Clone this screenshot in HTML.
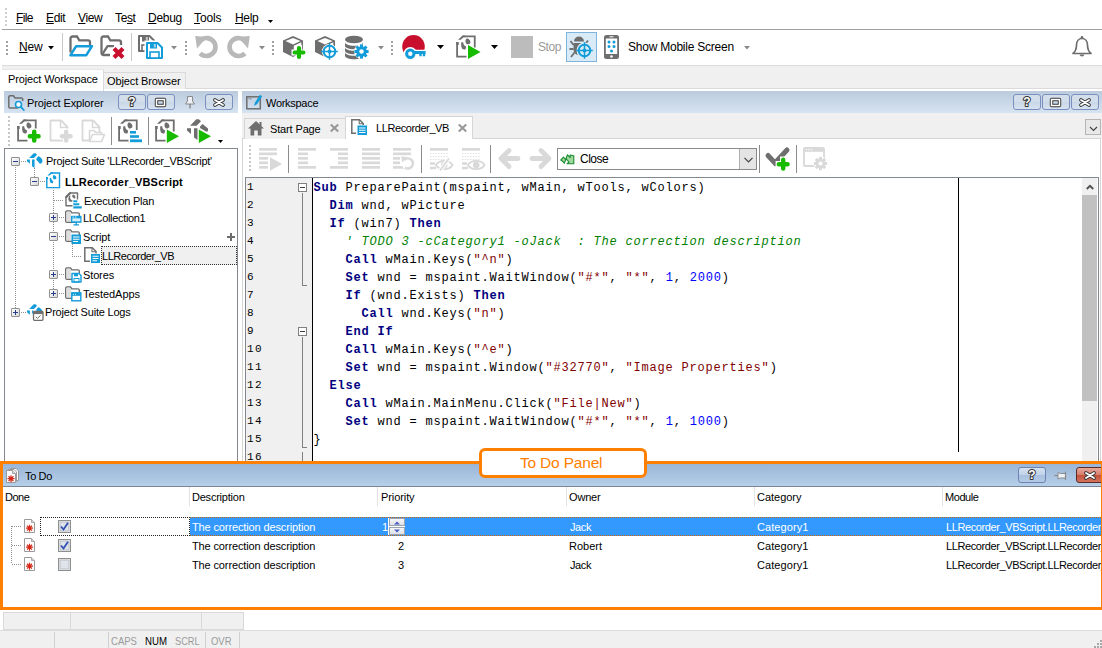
<!DOCTYPE html>
<html>
<head>
<meta charset="utf-8">
<title>To Do Panel</title>
<style>
html,body{margin:0;padding:0}
body{width:1102px;height:648px;position:relative;overflow:hidden;background:#fff;font-family:"Liberation Sans",sans-serif;font-size:11px;color:#000}
.a{position:absolute}
.t{position:absolute;white-space:nowrap;line-height:14px;height:14px}
.m{font-size:12px;line-height:16px;height:16px}
.u{text-decoration:underline}
svg{position:absolute;overflow:visible}
.hdr{background:linear-gradient(#bbcbdd,#d6e3f1)}
.btn{position:absolute;box-sizing:border-box;border:1px solid #7b90c0;border-radius:3px;background:linear-gradient(rgba(255,255,255,.32) 0%,rgba(255,255,255,.18) 48%,rgba(255,255,255,0) 52%,rgba(255,255,255,.12) 100%)}
.sep{position:absolute;width:1px;background:#8c8c8c}
.grip{position:absolute;width:2px;background-image:linear-gradient(#a0a0a0 50%,transparent 50%);background-size:2px 4px}
.code{position:absolute;left:313.5px;white-space:pre;font-family:"Liberation Mono",monospace;font-size:12px;letter-spacing:0.8px;line-height:18px;height:18px;color:#000}
.ln{position:absolute;left:247px;white-space:pre;font-family:"Liberation Mono",monospace;font-size:11px;letter-spacing:1.4px;line-height:18px;height:18px;color:#000}
.k{color:#000080;font-weight:bold}
.s{color:#800000}
.n{color:#0000ff}
.c{color:#008000;font-style:italic}
.col{position:absolute;top:487px;width:1px;height:19px;background:#e2e2e2}
.dot-h{position:absolute;height:1px;background-image:linear-gradient(90deg,#909090 50%,transparent 50%);background-size:2px 1px}
.dot-v{position:absolute;width:1px;background-image:linear-gradient(#909090 50%,transparent 50%);background-size:1px 2px}
.xb{position:absolute;z-index:1;box-sizing:border-box;width:9px;height:9px;border:1px solid #919191;border-radius:1px;background:linear-gradient(135deg,#fff,#d8d8d8)}
.xb:before{content:"";position:absolute;left:1px;top:3px;width:5px;height:1px;background:#2b3c8c}
.xb.p:after{content:"";position:absolute;left:3px;top:1px;width:1px;height:5px;background:#2b3c8c}
</style>
</head>
<body>
<!-- MENU BAR -->
<div class="a" style="left:0;top:0;width:1102px;height:29px;background:#fff"></div>
<div class="a" style="left:2px;top:29px;width:1100px;height:1px;background:#a0a0a0"></div>
<div class="grip" style="left:5px;top:8px;height:18px;opacity:.5"></div>
<div class="t m" id="m1" style="left:16px;top:10px;letter-spacing:-0.61px"><span class="u">F</span>ile</div>
<div class="t m" id="m2" style="left:46px;top:10px;letter-spacing:-0.33px"><span class="u">E</span>dit</div>
<div class="t m" id="m3" style="left:78px;top:10px;letter-spacing:-0.35px"><span class="u">V</span>iew</div>
<div class="t m" id="m4" style="left:115px;top:10px;letter-spacing:-0.36px">Te<span class="u">s</span>t</div>
<div class="t m" id="m5" style="left:148px;top:10px;letter-spacing:-0.28px"><span class="u">D</span>ebug</div>
<div class="t m" id="m6" style="left:194px;top:10px;letter-spacing:-0.1px"><span class="u">T</span>ools</div>
<div class="t m" id="m7" style="left:235px;top:10px;letter-spacing:-0.36px"><span class="u">H</span>elp</div>
<svg style="left:268px;top:20px" width="5" height="3"><path d="M0 0H5L2.500 3Z" fill="#000"/></svg>
<!-- TOOLBAR -->
<div class="a" style="left:0;top:30px;width:1102px;height:35px;background:#fff"></div>
<div class="a" style="left:2px;top:65px;width:1100px;height:1px;background:#dcdcdc"></div>
<div class="t m" id="tbnew" style="left:19px;top:39px;letter-spacing:-0.17px"><span class="u">N</span>ew</div>
<div class="t m" id="tbstop" style="left:538px;top:39px;color:#9a9a9a;letter-spacing:-0.42px">Stop</div>
<div class="t m" id="tbshow" style="left:628px;top:39px;letter-spacing:-0.23px">Show Mobile Screen</div>
<!-- TOOLBAR-ICONS -->
<div class="grip" style="left:6px;top:41px;height:14px;background-size:2px 4px"></div>
<div class="grip" style="left:185px;top:41px;height:14px;background-size:2px 4px"></div>
<div class="grip" style="left:272px;top:41px;height:14px;background-size:2px 4px"></div>
<div class="grip" style="left:391px;top:41px;height:14px;background-size:2px 4px"></div>
<svg style="left:48px;top:46px" width="6" height="3.5"><path d="M0 0H6L3 3.5Z" fill="#000"/></svg>
<div class="sep" style="left:62px;top:33px;height:28px;background:#c8c8c8"></div>
<div class="sep" style="left:131px;top:33px;height:28px;background:#c8c8c8"></div>
<svg style="left:69px;top:35px" width="24" height="24" viewBox="0 0 24 24"><path d="M1.500 17.500V3.500a2 2 0 0 1 2-2H8l2.300 3.800H19a2 2 0 0 1 2 2V10" fill="none" stroke="#6e6e6e" stroke-width="2.300"/><path d="M1.500 20.200L7.200 11.200H23L17.300 20.200Z" fill="#fff" stroke="#129cd9" stroke-width="2.500" stroke-linejoin="round"/></svg>
<svg style="left:100px;top:35px" width="24" height="24" viewBox="0 0 24 24"><path d="M10 20H3.500a2 2 0 0 1-2-2V3.500a2 2 0 0 1 2-2H8l2.300 3.800H19a2 2 0 0 1 2 2V10" fill="none" stroke="#6e6e6e" stroke-width="2.300"/><path d="M2.500 19L7.500 11.200H14" fill="none" stroke="#6e6e6e" stroke-width="2.300" stroke-linejoin="round"/><path d="M13 12.500L24 23.500M24 12.500L13 23.500" stroke="#fff" stroke-width="6.500"/><path d="M14 13.500L23 22.500M23 13.500L14 22.500" stroke="#c8102e" stroke-width="4.200"/></svg>
<svg style="left:138px;top:35px" width="17" height="17" viewBox="0 0 17 17"><path d="M1 1H11.500L16 5.500V16H1Z" fill="#fff" stroke="#6e6e6e" stroke-width="2" stroke-linejoin="round"/><rect x="4" y="1" width="7" height="5.500" fill="#6e6e6e"/><rect x="7.800" y="2" width="2" height="3.500" fill="#fff" opacity=".6"/><rect x="4" y="10" width="9" height="6" fill="#fff" stroke="#6e6e6e" stroke-width="1.600"/></svg>
<svg style="left:145.5px;top:42px" width="17" height="17" viewBox="0 0 17 17"><rect x="-1.500" y="-1.500" width="20" height="20" fill="#fff"/><path d="M1 1H11.500L16 5.500V16H1Z" fill="#fff" stroke="#129cd9" stroke-width="2" stroke-linejoin="round"/><rect x="4" y="1" width="7" height="5.500" fill="#129cd9"/><rect x="7.800" y="2" width="2" height="3.500" fill="#fff" opacity=".6"/><rect x="4" y="10" width="9" height="6" fill="#fff" stroke="#129cd9" stroke-width="1.600"/></svg>
<svg style="left:171px;top:46px" width="6" height="3.5"><path d="M0 0H6L3 3.5Z" fill="#8a8a8a"/></svg>
<svg style="left:195px;top:35px" width="24" height="24" viewBox="0 0 24 24"><path d="M5.700 5.100A9 9 0 1 1 5.100 18.400" fill="none" stroke="#b9b9b9" stroke-width="4.700"/><path d="M0.200 1L12 2L2 13.500Z" fill="#b9b9b9"/></svg>
<svg style="left:226px;top:35px" width="24" height="24" viewBox="0 0 24 24"><path d="M18.300 5.100A9 9 0 1 0 18.900 18.400" fill="none" stroke="#b9b9b9" stroke-width="4.700"/><path d="M23.800 1L12 2L22 13.500Z" fill="#b9b9b9"/></svg>
<svg style="left:259px;top:46px" width="6" height="3.5"><path d="M0 0H6L3 3.5Z" fill="#8a8a8a"/></svg>
<svg style="left:281px;top:35px" width="24" height="24" viewBox="0 0 24 24"><path d="M12 1L22 5.500V17L12 22L2 17V5.500Z" fill="#6e6e6e"/><path d="M4.500 6L12 9.500L19.500 6L12 3Z" fill="#fff"/><path d="M12.800 10.800L20.300 7.300V16L12.800 19.800Z" fill="#fff"/><path d="M10.5 17.5H25.5M18 10V25" stroke="#fff" stroke-width="6.2"/><path d="M13.6 17.5H22.4M18 13.1V21.9" stroke="#17bb00" stroke-width="4.2" stroke-linecap="round"/></svg>
<svg style="left:312.5px;top:35px" width="24" height="24" viewBox="0 0 24 24"><path d="M12 1L22 5.500V17L12 22L2 17V5.500Z" fill="#6e6e6e"/><path d="M4.500 6L12 9.500L19.500 6L12 3Z" fill="#fff"/><path d="M12.800 10.800L20.300 7.300V16L12.800 19.800Z" fill="#fff"/><circle cx="16.5" cy="16.5" r="7.6" fill="#fff"/><circle cx="16.5" cy="16.5" r="5.8" fill="none" stroke="#129cd9" stroke-width="2"/><path d="M8.2 16.5H24.8M16.5 8.2V24.8" stroke="#129cd9" stroke-width="1.500"/><circle cx="16.5" cy="16.5" r="2" fill="#129cd9"/></svg>
<svg style="left:343.5px;top:35px" width="24" height="24" viewBox="0 0 24 24"><ellipse cx="10" cy="4.500" rx="9" ry="3.800" fill="#6e6e6e"/><path d="M1 7c0 5 18 5 18 0v3.600c0 5-18 5-18 0z" fill="#6e6e6e"/><path d="M1 12c0 5 18 5 18 0v3.600c0 5-18 5-18 0z" fill="#6e6e6e"/><path d="M1 17c0 5 18 5 18 0v3.600c0 5-18 5-18 0z" fill="#6e6e6e"/><circle cx="17.5" cy="16.5" r="7.5" fill="#fff"/><circle cx="17.5" cy="16.5" r="5.3" fill="#129cd9"/><rect x="16" y="9.4" width="3" height="14.2" fill="#129cd9" transform="rotate(0 17.5 16.5)"/><rect x="16" y="9.4" width="3" height="14.2" fill="#129cd9" transform="rotate(45 17.5 16.5)"/><rect x="16" y="9.4" width="3" height="14.2" fill="#129cd9" transform="rotate(90 17.5 16.5)"/><rect x="16" y="9.4" width="3" height="14.2" fill="#129cd9" transform="rotate(135 17.5 16.5)"/><circle cx="17.5" cy="16.5" r="2.226" fill="#fff"/></svg>
<svg style="left:378px;top:46px" width="6" height="3.5"><path d="M0 0H6L3 3.5Z" fill="#8a8a8a"/></svg>
<svg style="left:402px;top:35px" width="24" height="24" viewBox="0 0 24 24"><circle cx="11.500" cy="11.400" r="11.300" fill="#c8102e"/><circle cx="8.300" cy="18.700" r="3.700" fill="none" stroke="#fff" stroke-width="6.200"/><path d="M11 17.500H25" stroke="#fff" stroke-width="5.500" fill="none"/><path d="M18.500 18v4.300M22 18v4.300" stroke="#fff" stroke-width="4.800"/><rect x="11" y="17" width="13" height="7" fill="#fff"/><circle cx="8.300" cy="18.700" r="3.700" fill="#fff" stroke="#129cd9" stroke-width="3"/><path d="M12 17.500H23.600" stroke="#129cd9" stroke-width="3" fill="none"/><path d="M18.500 18v3.300M22 18v3.300" stroke="#129cd9" stroke-width="2.400"/></svg>
<svg style="left:437px;top:45px" width="7" height="4"><path d="M0 0H7L3.5 4Z" fill="#000"/></svg>
<svg style="left:455.5px;top:35px" width="24" height="24" viewBox="0 0 24 24"><path d="M6.500 1.400H18.750V12.500M1.100 7V21.700H10.500" fill="none" stroke="#6e6e6e" stroke-width="1.800"/><path d="M2 4.800L6.600 0.500H9.500V2.300H7.600L4.800 4.800Z" fill="#6e6e6e"/><rect x="0.200" y="7" width="2.500" height="3" fill="#6e6e6e"/><path d="M11 3.200c2.200.6 3.800 2.600 3.400 4.800c-.8 1-2 1.500-3.400 1.500c-1.200-1.200-1.800-2.800-1.400-4.500c.3-.8.8-1.400 1.400-1.800z" fill="#6e6e6e"/><path d="M5.300 7.300h2c-.2 2 .8 3.200 2.800 4.200l-.5 2.800c-1.300.6-2.800.2-3.600-.8c-.9-1.700-1-4.200-.7-6.200z" fill="#6e6e6e"/><path d="M12 10L24.5 17L12 24Z" fill="#17bb00" stroke="#fff" stroke-width="1.2" paint-order="stroke"/></svg>
<svg style="left:491px;top:45px" width="7" height="4"><path d="M0 0H7L3.5 4Z" fill="#000"/></svg>
<div class="a" style="left:511px;top:36px;width:22px;height:22px;background:#bcbcbc"></div>
<div class="a" style="left:566px;top:32px;width:31px;height:30px;box-sizing:border-box;background:#d9ebf7;border:1px solid #7fb5dd"></div>
<svg style="left:569px;top:35px" width="24" height="24" viewBox="0 0 24 24"><path d="M5 6.500a5 5 0 0 1 10 0z" fill="#6e6e6e"/><path d="M4.500 8H15.500V14c0 4-2.500 6-5.500 6s-5.500-2-5.500-6z" fill="#6e6e6e"/><path d="M4.500 10L1.500 6M15.500 10L19 5.500M4.500 14H0.500M5.500 17.500L2 22" stroke="#6e6e6e" stroke-width="1.800" fill="none"/><circle cx="15.500" cy="15.500" r="8" fill="#d9ebf7"/><circle cx="15.5" cy="15.5" r="7.6" fill="#d9ebf7"/><circle cx="15.5" cy="15.5" r="5.8" fill="none" stroke="#129cd9" stroke-width="2"/><path d="M7.2 15.5H23.8M15.5 7.2V23.8" stroke="#129cd9" stroke-width="1.500"/><circle cx="15.5" cy="15.5" r="2" fill="#129cd9"/></svg>
<svg style="left:604px;top:35px" width="15" height="24" viewBox="0 0 15 24"><rect x="0" y="0" width="15" height="24" rx="2.500" fill="#6e6e6e"/><rect x="1.800" y="3.500" width="11.400" height="15.500" fill="#fff"/><rect x="5.500" y="1.300" width="4" height="1" fill="#fff"/><circle cx="7.500" cy="21.500" r="1.300" fill="#fff"/><circle cx="5" cy="7" r="1.500" fill="#129cd9"/><circle cx="10" cy="7" r="1.500" fill="#129cd9"/><circle cx="5" cy="11.5" r="1.500" fill="#129cd9"/><circle cx="10" cy="11.5" r="1.500" fill="#129cd9"/><circle cx="7.5" cy="16" r="1.500" fill="#129cd9"/></svg>
<svg style="left:744px;top:46px" width="6" height="3.5"><path d="M0 0H6L3 3.5Z" fill="#8a8a8a"/></svg>
<svg style="left:1071px;top:35px" width="22" height="23" viewBox="0 0 22 23"><path d="M2 18.500c2.500-2 3.500-4 3.500-8.500c0-4 2.500-6.500 5.500-6.500s5.500 2.500 5.500 6.500c0 4.500 1 6.500 3.500 8.500z" fill="none" stroke="#6e6e6e" stroke-width="1.700" stroke-linejoin="round"/><circle cx="11" cy="2.300" r="1.300" fill="#6e6e6e"/><path d="M8.500 19.500a2.600 2.600 0 0 0 5 0" fill="#6e6e6e"/></svg>
<!-- /GEN:TB -->
<!-- DOCK TABS -->
<div class="a" style="left:2px;top:66px;width:1100px;height:23px;background:#f0f0f0"></div>
<div class="a" style="left:2px;top:88px;width:1100px;height:1px;background:#dadada"></div>
<div class="a" style="left:2px;top:69px;width:101px;height:22px;background:#fff;border-right:1px solid #dadada;border-top:1px solid #e6e6e6"></div>
<div class="a" style="left:104px;top:72px;width:81px;height:16px;background:#f0f0f0;border-right:1px solid #dadada;border-top:1px solid #dadada"></div>
<div class="t" id="tabpw" style="left:8px;top:72px;letter-spacing:-0.14px">Project Workspace</div>
<div class="t" id="tabob" style="left:107px;top:74px;letter-spacing:-0.12px">Object Browser</div>
<!-- PROJECT EXPLORER -->
<div class="a hdr" style="left:4px;top:91px;width:234px;height:22px"></div>
<div class="t" id="pehdr" style="left:27px;top:96px;letter-spacing:-0.11px">Project Explorer</div>
<div class="btn" style="left:118px;top:94px;width:28px;height:16px"></div>
<div class="btn" style="left:147px;top:94px;width:28px;height:16px"></div>
<div class="btn" style="left:205px;top:94px;width:28px;height:16px"></div>
<div class="grip" style="left:8px;top:116px;height:30px;opacity:.6"></div>
<div class="sep" style="left:111px;top:117px;height:28px"></div>
<div class="sep" style="left:148px;top:117px;height:28px"></div>
<div class="a" style="left:4px;top:148px;width:232px;height:320px;border:1px solid #828790;background:#fff"></div>
<!-- TREE -->
<svg style="left:17px;top:119px" width="24" height="24" viewBox="0 0 24 24"><path d="M6.500 1.400H18.750V12.500M1.100 7V21.700H10.500" fill="none" stroke="#6e6e6e" stroke-width="1.800"/><path d="M2 4.800L6.600 0.500H9.500V2.300H7.600L4.800 4.800Z" fill="#6e6e6e"/><rect x="0.200" y="7" width="2.500" height="3" fill="#6e6e6e"/><path d="M11 3.200c2.200.6 3.800 2.600 3.400 4.800c-.8 1-2 1.500-3.400 1.500c-1.200-1.200-1.800-2.800-1.400-4.500c.3-.8.8-1.400 1.400-1.800z" fill="#6e6e6e"/><path d="M5.300 7.300h2c-.2 2 .8 3.200 2.800 4.200l-.5 2.800c-1.300.6-2.800.2-3.600-.8c-.9-1.700-1-4.200-.7-6.200z" fill="#6e6e6e"/><path d="M9.6 17.2H24.8M17.2 9.6V24.8" stroke="#fff" stroke-width="6.5"/><path d="M12.85 17.2H21.55M17.2 12.85V21.55" stroke="#17bb00" stroke-width="4.5" stroke-linecap="round"/></svg>
<svg style="left:49px;top:119px" width="24" height="24" viewBox="0 0 24 24"><path d="M1.500 1.500H12L18.500 8V21.500H1.500Z" fill="none" stroke="#d9d9d9" stroke-width="1.800" stroke-linejoin="round"/><path d="M11.500 2V8.500H18" fill="none" stroke="#d9d9d9" stroke-width="1.500"/><path d="M9.6 17.2H24.8M17.2 9.6V24.8" stroke="#fff" stroke-width="6.5"/><path d="M12.85 17.2H21.55M17.2 12.85V21.55" stroke="#d9d9d9" stroke-width="4.5" stroke-linecap="round"/></svg>
<svg style="left:81px;top:119px" width="24" height="24" viewBox="0 0 24 24"><path d="M1.500 1.500H12L18.500 8V21.500H1.500Z" fill="none" stroke="#d9d9d9" stroke-width="1.800" stroke-linejoin="round"/><path d="M11.500 2V8.500H18" fill="none" stroke="#d9d9d9" stroke-width="1.500"/><path d="M8.500 22V11.500H13l1.500 2H20.500V16" fill="#fff" stroke="#d9d9d9" stroke-width="1.600" stroke-linejoin="round"/><path d="M8.500 22.500L11.500 15.500H23.500L20.500 22.500Z" fill="#fff" stroke="#d9d9d9" stroke-width="1.600" stroke-linejoin="round"/></svg>
<svg style="left:118px;top:119px" width="24" height="24" viewBox="0 0 24 24"><path d="M6.500 1.400H18.750V12.500M1.100 7V21.700H10.500" fill="none" stroke="#6e6e6e" stroke-width="1.800"/><path d="M2 4.800L6.600 0.500H9.500V2.300H7.600L4.800 4.800Z" fill="#6e6e6e"/><rect x="0.200" y="7" width="2.500" height="3" fill="#6e6e6e"/><path d="M11 3.200c2.200.6 3.800 2.600 3.400 4.800c-.8 1-2 1.500-3.400 1.500c-1.200-1.200-1.800-2.800-1.400-4.500c.3-.8.8-1.400 1.400-1.800z" fill="#6e6e6e"/><path d="M5.300 7.300h2c-.2 2 .8 3.200 2.800 4.200l-.5 2.800c-1.300.6-2.800.2-3.600-.8c-.9-1.700-1-4.200-.7-6.200z" fill="#6e6e6e"/><rect x="11" y="11" width="14" height="13" fill="#fff"/><rect x="12" y="12" width="6" height="2.600" fill="#129cd9"/><rect x="12" y="16.200" width="9" height="2.600" fill="#129cd9"/><rect x="12" y="20.400" width="12" height="2.800" fill="#129cd9"/></svg>
<svg style="left:155px;top:119px" width="24" height="24" viewBox="0 0 24 24"><path d="M6.500 1.400H18.750V12.500M1.100 7V21.700H10.500" fill="none" stroke="#6e6e6e" stroke-width="1.800"/><path d="M2 4.800L6.600 0.500H9.500V2.300H7.600L4.800 4.800Z" fill="#6e6e6e"/><rect x="0.200" y="7" width="2.500" height="3" fill="#6e6e6e"/><path d="M11 3.200c2.200.6 3.800 2.600 3.400 4.800c-.8 1-2 1.500-3.400 1.500c-1.200-1.200-1.800-2.800-1.400-4.500c.3-.8.8-1.400 1.400-1.800z" fill="#6e6e6e"/><path d="M5.300 7.300h2c-.2 2 .8 3.200 2.800 4.200l-.5 2.800c-1.300.6-2.800.2-3.600-.8c-.9-1.700-1-4.200-.7-6.200z" fill="#6e6e6e"/><path d="M11.8 10.5L24 17.25L11.8 24Z" fill="#17bb00" stroke="#fff" stroke-width="1.2" paint-order="stroke"/></svg>
<svg style="left:187px;top:119px" width="24" height="24" viewBox="0 0 24 24"><path d="M3 6.800L9.300 0.200H11.800L14 2.300L9.600 6.800Z" fill="#6e6e6e"/><path d="M0 9.200H4V15L0 11.500Z" fill="#6e6e6e"/><path d="M7 9.200H10.500V21L7 18.500Z" fill="#6e6e6e"/><path d="M13 7.500L15.500 5L21 9.500V12L19.500 12.800L13 9Z" fill="#6e6e6e"/><path d="M11.8 10.5L24 17.25L11.8 24Z" fill="#17bb00" stroke="#fff" stroke-width="1.2" paint-order="stroke"/></svg>
<svg style="left:218px;top:140px" width="5" height="3"><path d="M0 0H5L2.5 3Z" fill="#000"/></svg>
<!-- /GEN:TREE -->
<div class="a" style="left:101px;top:246px;width:136px;height:19px;background:#f0f0f0;box-sizing:border-box;border:1px dotted #333"></div>
<div class="t" id="tr1" style="left:46px;top:154px;letter-spacing:-0.29px">Project Suite 'LLRecorder_VBScript'</div>
<div class="t" id="tr2" style="left:65px;top:175px;font-weight:bold;letter-spacing:0.19px">LLRecorder_VBScript</div>
<div class="t" id="tr3" style="left:84px;top:194px;letter-spacing:-0.24px">Execution Plan</div>
<div class="t" id="tr4" style="left:83px;top:211px;letter-spacing:-0.33px">LLCollection1</div>
<div class="t" id="tr5" style="left:83px;top:230px;letter-spacing:-0.15px">Script</div>
<div class="t" id="tr6" style="left:102px;top:249px;letter-spacing:-0.48px">LLRecorder_VB</div>
<div class="t" id="tr7" style="left:83px;top:268px;letter-spacing:-0.13px">Stores</div>
<div class="t" id="tr8" style="left:83px;top:287px;letter-spacing:-0.05px">TestedApps</div>
<div class="t" id="tr9" style="left:45px;top:305px;letter-spacing:-0.21px">Project Suite Logs</div>
<div class="xb" style="left:11px;top:157px"></div>
<div class="xb" style="left:30px;top:177px"></div>
<div class="xb p" style="left:49px;top:213px"></div>
<div class="xb" style="left:49px;top:232px"></div>
<div class="xb p" style="left:49px;top:270px"></div>
<div class="xb p" style="left:49px;top:289px"></div>
<div class="xb p" style="left:11px;top:308px"></div>
<div class="dot-v" style="left:15px;top:167px;height:141px"></div>
<div class="dot-v" style="left:34px;top:168px;height:9px"></div>
<div class="dot-v" style="left:53px;top:188px;height:101px"></div>
<div class="dot-v" style="left:72px;top:244px;height:12px"></div>
<div class="dot-h" style="left:21px;top:161px;width:5px"></div>
<div class="dot-h" style="left:40px;top:181px;width:5px"></div>
<div class="dot-h" style="left:54px;top:200px;width:10px"></div>
<div class="dot-h" style="left:59px;top:217px;width:5px"></div>
<div class="dot-h" style="left:59px;top:236px;width:5px"></div>
<div class="dot-h" style="left:72px;top:256px;width:10px"></div>
<div class="dot-h" style="left:59px;top:274px;width:5px"></div>
<div class="dot-h" style="left:59px;top:293px;width:5px"></div>
<div class="dot-h" style="left:21px;top:312px;width:5px"></div>
<div class="a" style="left:227px;top:236px;width:8px;height:2px;background:#6b6b6b"></div><div class="a" style="left:230px;top:233px;width:2px;height:8px;background:#6b6b6b"></div>
<!-- TREE-ICONS -->
<svg style="left:26.5px;top:153px" width="16" height="16" viewBox="0 0 16 16"><g transform="scale(.72)"><path d="M3 6.800L9.300 0.200H11.800L14 2.300L9.600 6.800Z" fill="#129cd9"/><path d="M0 9.200H4V15L0 11.500Z" fill="#129cd9"/><path d="M7 9.200H10.500V21L7 18.500Z" fill="#129cd9"/><path d="M13 7.500L15.500 4.500C18.500 5 21.500 8 21.500 11C21.500 13 20 14.500 18 15L13 9.500Z" fill="#129cd9"/></g></svg>
<svg style="left:46px;top:172px" width="15" height="17" viewBox="0 0 15 17"><g transform="scale(.72)"><rect x="1.100" y="1.400" width="17.600" height="20.300" fill="#fff"/><path d="M6.500 1.400H18.750V21.700H1.100V7" fill="none" stroke="#129cd9" stroke-width="2"/><path d="M2 4.800L6.600 0.500H9.500V2.300H7.600L4.800 4.800Z" fill="#129cd9"/><rect x="0.200" y="7" width="2.500" height="3" fill="#129cd9"/><path d="M11 4.200c2.200.6 3.800 2.600 3.400 4.800c-.8 1-2 1.500-3.400 1.500c-1.200-1.200-1.800-2.800-1.400-4.500c.3-.8.8-1.400 1.400-1.800z" fill="#129cd9"/><path d="M5.300 8.300h2c-.2 2 .8 3.200 2.800 4.200l-.5 2.800c-1.300.6-2.800.2-3.600-.8c-.9-1.700-1-4.200-.7-6.200z" fill="#129cd9"/><path d="M0.500 23.200H19.500" stroke="#bfe3f5" stroke-width="1.400"/></g></svg>
<svg style="left:65px;top:192px" width="17" height="17" viewBox="0 0 17 17"><path d="M1 5V13.800H12.500V1H5Z" fill="#fff" stroke="#6e6e6e" stroke-width="1.400" stroke-linejoin="round"/><path d="M0.300 4.500L4.500 0.300H6V1.800L1.800 6H0.300Z" fill="#6e6e6e"/><path d="M8 2.500c2 .3 3 2.300 2 4.300c-1.100-.4-2.100-1.100-2.700-2.100c-.3-.8 0-1.500.7-2.200z" fill="#6e6e6e"/><path d="M5.800 3.800c-1 1-1 2.700 0 3.700c.8.700 1.700 1 2.700 1c-1 1.300-3 1.700-4.300.7c-1.400-1.400-1-4 .3-5.400z" fill="#6e6e6e"/><rect x="7.500" y="7.500" width="9.500" height="9.500" fill="#fff"/><rect x="8.300" y="8.300" width="4" height="2" fill="#129cd9"/><rect x="8.300" y="11.300" width="6" height="2" fill="#129cd9"/><rect x="8.300" y="14.300" width="8.500" height="2.200" fill="#129cd9"/></svg>
<svg style="left:65px;top:210px" width="17" height="16" viewBox="0 0 17 16"><path d="M12 12.200H2a1.300 1.300 0 0 1-1.300-1.300V2.200A1.300 1.300 0 0 1 2 .9H5.500l1.300 2H13a1.300 1.300 0 0 1 1.300 1.300V6" fill="none" stroke="#6e6e6e" stroke-width="1.400"/><rect x="1.500" y="2" width="4.500" height="9.500" fill="#dedede"/><rect x="6" y="5.800" width="10.500" height="7" fill="#129cd9"/><rect x="7.300" y="8.300" width="8" height="3" fill="#d6eefa"/><path d="M7.500 7.100H9M10 7.100H11.500" stroke="#fff" stroke-width=".9"/><path d="M11.200 12.800V14.500M8.500 14.800H14" stroke="#129cd9" stroke-width="1.300"/></svg>
<svg style="left:65px;top:229px" width="17" height="16" viewBox="0 0 17 16"><path d="M12 12.200H2a1.300 1.300 0 0 1-1.300-1.300V2.200A1.300 1.300 0 0 1 2 .9H5.500l1.300 2H13a1.300 1.300 0 0 1 1.300 1.300V6" fill="none" stroke="#6e6e6e" stroke-width="1.400"/><rect x="1.500" y="2" width="4.500" height="9.500" fill="#dedede"/><rect x="6.500" y="5.500" width="9.500" height="9.500" fill="#129cd9"/><path d="M8 8H14.500M8 10.200H14.500M8 12.500H13" stroke="#fff" stroke-width="1.100"/></svg>
<svg style="left:65px;top:267px" width="17" height="16" viewBox="0 0 17 16"><path d="M12 12.200H2a1.300 1.300 0 0 1-1.300-1.300V2.200A1.300 1.300 0 0 1 2 .9H5.500l1.300 2H13a1.300 1.300 0 0 1 1.300 1.300V6" fill="none" stroke="#6e6e6e" stroke-width="1.400"/><rect x="1.500" y="2" width="4.500" height="9.500" fill="#dedede"/><path d="M7 6.500H14L16 8.500V15H7Z" fill="#fff" stroke="#129cd9" stroke-width="1.400" stroke-linejoin="round"/><rect x="9" y="6.500" width="4" height="2.800" fill="#129cd9"/><rect x="9" y="11.500" width="5" height="3.500" fill="none" stroke="#129cd9" stroke-width="1"/></svg>
<svg style="left:65px;top:286px" width="17" height="16" viewBox="0 0 17 16"><path d="M12 12.200H2a1.300 1.300 0 0 1-1.300-1.300V2.200A1.300 1.300 0 0 1 2 .9H5.500l1.300 2H13a1.300 1.300 0 0 1 1.300 1.300V6" fill="none" stroke="#6e6e6e" stroke-width="1.400"/><rect x="1.500" y="2" width="4.500" height="9.500" fill="#dedede"/><rect x="6.800" y="6.800" width="9" height="8" fill="#fff" stroke="#129cd9" stroke-width="1.400"/><rect x="6.800" y="6.800" width="9" height="3" fill="#129cd9"/><path d="M8 8.300H9M10 8.300H11" stroke="#fff" stroke-width=".8"/></svg>
<svg style="left:84px;top:247px" width="16" height="16" viewBox="0 0 16 16"><path d="M6 14.300H0.800V0.800H8.300L12 4.500V6.500" fill="none" stroke="#6e6e6e" stroke-width="1.500"/><path d="M8 1V4.800H11.800" fill="none" stroke="#6e6e6e" stroke-width="1.100"/><rect x="7" y="7" width="9" height="9" fill="#129cd9"/><path d="M8.500 9.300H14.500M8.500 11.500H14.500M8.500 13.700H13" stroke="#fff" stroke-width="1.100"/></svg>
<svg style="left:27px;top:304px" width="17" height="17" viewBox="0 0 17 17"><g transform="scale(.72)"><path d="M3 6.800L9.300 0.200H11.800L14 2.300L9.600 6.800Z" fill="#129cd9"/><path d="M0 9.200H4V15L0 11.500Z" fill="#129cd9"/><path d="M7 9.200H9V14L7 13Z" fill="#129cd9"/><path d="M13 7.500L15.500 4.500C18.500 5 21.500 8 21.500 11C21.500 13 20 14.500 18 15L13 9.500Z" fill="#129cd9"/></g><rect x="6.500" y="7.500" width="9.500" height="8.800" rx="1" fill="#fff" stroke="#6e6e6e" stroke-width="1.300"/><rect x="6.500" y="7.500" width="9.500" height="2.600" fill="#6e6e6e"/><path d="M8.800 12.800L10.500 14.300L13.500 11.500" fill="none" stroke="#6e6e6e" stroke-width="1"/></svg>
<!-- /GEN:TI -->
<!-- WORKSPACE -->
<div class="a hdr" style="left:242px;top:91px;width:860px;height:22px"></div>
<div class="t" id="wshdr" style="left:266px;top:96px;letter-spacing:-0.29px">Workspace</div>
<div class="btn" style="left:1013px;top:94px;width:28px;height:16px"></div>
<div class="btn" style="left:1042px;top:94px;width:28px;height:16px"></div>
<div class="btn" style="left:1071px;top:94px;width:28px;height:16px"></div>
<div class="a" style="left:242px;top:113px;width:860px;height:26px;background:#f0f0f0"></div>
<div class="a" style="left:242px;top:138px;width:859px;height:330px;background:#fff;border:1px solid #d5d5d5;box-sizing:border-box"></div>
<div class="a" style="left:244px;top:118px;width:101px;height:20px;background:#f0f0f0;border:1px solid #d5d5d5;border-bottom:none"></div>
<div class="a" style="left:345px;top:116px;width:128px;height:23px;background:#fff;border:1px solid #d5d5d5;border-bottom:none;box-sizing:border-box"></div>
<div class="t" id="tabsp" style="left:270px;top:122px;letter-spacing:-0.14px">Start Page</div>
<div class="t" id="tabll" style="left:376px;top:121px;letter-spacing:-0.41px">LLRecorder_VB</div>
<div class="a" style="left:1085px;top:119px;width:16px;height:16px;background:#e8e8e8;border:1px solid #b5b5b5;box-sizing:border-box"></div>
<!-- HEADER-ICONS -->
<svg style="left:8px;top:95px" width="17" height="16" viewBox="0 0 17 16"><path d="M10 13H2a1.200 1.200 0 0 1-1.200-1.200V2a1.200 1.200 0 0 1 1.200-1.200H5.500l1.500 2.200H13.500a1.200 1.200 0 0 1 1.200 1.200V6" fill="none" stroke="#6e6e6e" stroke-width="1.500"/><circle cx="10.500" cy="9.500" r="3" fill="#fff" stroke="#129cd9" stroke-width="1.600"/><path d="M12.800 11.800L15.800 15" stroke="#129cd9" stroke-width="1.800" stroke-linecap="round"/></svg>
<svg style="left:126px;top:95px" width="12" height="14"><text x="6" y="11" text-anchor="middle" font-family="Liberation Sans,sans-serif" font-weight="bold" font-size="12" fill="#fff" stroke="#333" stroke-width="2" paint-order="stroke" stroke-linejoin="round">?</text></svg>
<svg style="left:155px;top:97.5px" width="11" height="9" viewBox="0 0 11 9"><rect x="1.500" y="1.500" width="8" height="6" fill="none" stroke="#333" stroke-width="3.400" stroke-linejoin="round"/><rect x="1.500" y="1.500" width="8" height="6" fill="none" stroke="#fff" stroke-width="1.500"/></svg>
<svg style="left:184px;top:95.5px" width="12" height="13" viewBox="0 0 12 13"><path d="M3.500 0.500H8.500V5L10.500 8H1.500L3.500 5Z" fill="#eef2f7" stroke="#8a8a8a" stroke-width="1"/><path d="M6 8V12.500" stroke="#7a7a7a" stroke-width="1.200"/></svg>
<svg style="left:213px;top:97.5px" width="12" height="9" viewBox="0 0 12 9"><path d="M2 2L10 7M10 2L2 7" stroke="#333" stroke-width="3.800" stroke-linecap="round"/><path d="M2 2L10 7M10 2L2 7" stroke="#fff" stroke-width="1.900" stroke-linecap="round"/></svg>
<svg style="left:246px;top:94px" width="17" height="16" viewBox="0 0 17 16"><rect x="0.800" y="2.800" width="13.500" height="12" fill="none" stroke="#6e6e6e" stroke-width="1.500"/><path d="M2.500 4.800H6" stroke="#6e6e6e" stroke-width="1" stroke-dasharray="1 .6"/><path d="M8 12L9 8.500L14 0.800L16.200 2.200L11.200 10Z" fill="#129cd9"/></svg>
<svg style="left:1021px;top:95px" width="12" height="14"><text x="6" y="11" text-anchor="middle" font-family="Liberation Sans,sans-serif" font-weight="bold" font-size="12" fill="#fff" stroke="#333" stroke-width="2" paint-order="stroke" stroke-linejoin="round">?</text></svg>
<svg style="left:1050px;top:97.5px" width="11" height="9" viewBox="0 0 11 9"><rect x="1.500" y="1.500" width="8" height="6" fill="none" stroke="#333" stroke-width="3.400" stroke-linejoin="round"/><rect x="1.500" y="1.500" width="8" height="6" fill="none" stroke="#fff" stroke-width="1.500"/></svg>
<svg style="left:1079px;top:97.5px" width="12" height="9" viewBox="0 0 12 9"><path d="M2 2L10 7M10 2L2 7" stroke="#333" stroke-width="3.800" stroke-linecap="round"/><path d="M2 2L10 7M10 2L2 7" stroke="#fff" stroke-width="1.900" stroke-linecap="round"/></svg>
<svg style="left:248px;top:120.5px" width="16" height="15" viewBox="0 0 16 15"><path d="M8 0L16 7.500H13.500V14.500H9.800V9.500H6.200V14.500H2.500V7.500H0Z" fill="#6e6e6e"/><rect x="11.500" y="1" width="2" height="4" fill="#6e6e6e"/></svg>
<svg style="left:351px;top:118.5px" width="16" height="16" viewBox="0 0 16 16"><path d="M5 14.200H0.800V0.800H8.500L12.200 4.500V6" fill="none" stroke="#6e6e6e" stroke-width="1.500"/><path d="M8.200 1V4.800H12" fill="none" stroke="#6e6e6e" stroke-width="1.100"/><rect x="6.500" y="6.500" width="9.500" height="9.500" fill="#129cd9"/><path d="M8 9H14.500M8 11.200H14.500M8 13.500H14.500" stroke="#fff" stroke-width="1.100"/></svg>
<svg style="left:330px;top:124px" width="9" height="8" viewBox="0 0 9 8"><path d="M0.800 0.500L8.200 7.500M8.200 0.500L0.800 7.500" stroke="#989898" stroke-width="2.100"/></svg>
<svg style="left:457.5px;top:124px" width="9" height="8" viewBox="0 0 9 8"><path d="M0.800 0.500L8.200 7.500M8.200 0.500L0.800 7.500" stroke="#989898" stroke-width="2.100"/></svg>
<svg style="left:1089px;top:126px" width="9" height="6" viewBox="0 0 9 6"><path d="M1 1L4.500 4.500L8 1" fill="none" stroke="#444" stroke-width="1.200"/></svg>
<!-- /GEN:HD -->
<div class="grip" style="left:249px;top:145px;height:28px;opacity:.6"></div>
<div class="sep" style="left:288px;top:145px;height:28px"></div>
<div class="sep" style="left:421px;top:145px;height:28px"></div>
<div class="sep" style="left:490px;top:145px;height:28px"></div>
<div class="sep" style="left:759px;top:145px;height:28px"></div>
<div class="sep" style="left:796px;top:145px;height:28px"></div>
<div class="a" style="left:557px;top:148px;width:200px;height:22px;background:#fff;border:1px solid #8a8a8a;box-sizing:border-box"></div>
<div class="a" style="left:739px;top:149px;width:17px;height:20px;background:#e4e4e4;border-left:1px solid #b0b0b0;box-sizing:border-box"></div>
<div class="t m" id="cbclose" style="left:580px;top:151px;letter-spacing:-0.52px">Close</div>
<!-- EDITOR TOOLBAR -->
<svg style="left:259px;top:148.3px" width="24" height="24" viewBox="0 0 24 24"><rect x="0" y="0" width="18" height="2.700" fill="#d9d9d9"/><rect x="0" y="4.5" width="18" height="2.700" fill="#d9d9d9"/><rect x="0" y="9" width="9" height="2.700" fill="#d9d9d9"/><rect x="0" y="13.5" width="9" height="2.700" fill="#d9d9d9"/><rect x="0" y="18" width="9" height="2.700" fill="#d9d9d9"/><path d="M11 9.200L23 16L11 22.800Z" fill="#d9d9d9"/></svg>
<svg style="left:298px;top:148.3px" width="24" height="24" viewBox="0 0 24 24"><rect x="0" y="0" width="18" height="2.700" fill="#d9d9d9"/><rect x="0" y="4.5" width="10" height="2.700" fill="#d9d9d9"/><rect x="0" y="9" width="10" height="2.700" fill="#d9d9d9"/><rect x="0" y="13.5" width="10" height="2.700" fill="#d9d9d9"/><rect x="0" y="18" width="18" height="2.700" fill="#d9d9d9"/></svg>
<svg style="left:330px;top:148.3px" width="24" height="24" viewBox="0 0 24 24"><rect x="0" y="0" width="18" height="2.700" fill="#d9d9d9"/><rect x="8" y="4.5" width="10" height="2.700" fill="#d9d9d9"/><rect x="8" y="9" width="10" height="2.700" fill="#d9d9d9"/><rect x="8" y="13.5" width="10" height="2.700" fill="#d9d9d9"/><rect x="0" y="18" width="18" height="2.700" fill="#d9d9d9"/></svg>
<svg style="left:362px;top:148.3px" width="24" height="24" viewBox="0 0 24 24"><rect x="0" y="0" width="18" height="2.700" fill="#d9d9d9"/><rect x="0" y="4.5" width="18" height="2.700" fill="#d9d9d9"/><rect x="0" y="9" width="18" height="2.700" fill="#d9d9d9"/><rect x="0" y="13.5" width="18" height="2.700" fill="#d9d9d9"/><rect x="0" y="18" width="18" height="2.700" fill="#d9d9d9"/></svg>
<svg style="left:392.5px;top:148.3px" width="24" height="24" viewBox="0 0 24 24"><rect x="0" y="0" width="18" height="2.700" fill="#d9d9d9"/><rect x="0" y="4.5" width="18" height="2.700" fill="#d9d9d9"/><rect x="0" y="9" width="7" height="2.700" fill="#d9d9d9"/><rect x="0" y="13.5" width="7" height="2.700" fill="#d9d9d9"/><rect x="0" y="18" width="12" height="2.700" fill="#d9d9d9"/><circle cx="15.500" cy="15.500" r="6.800" fill="#fff"/><path d="M11.500 11.800A5 5 0 1 1 12 19.500" fill="none" stroke="#d9d9d9" stroke-width="2.600"/><path d="M8 8.500L14.500 9L9.500 14.500Z" fill="#d9d9d9"/></svg>
<svg style="left:429.5px;top:148.3px" width="24" height="24" viewBox="0 0 24 24"><rect x="0" y="0" width="18" height="2.700" fill="#d9d9d9"/><path d="M0 5.5H18" stroke="#d9d9d9" stroke-width="1.200" stroke-dasharray="1.500 1.200" opacity=".75"/><path d="M0 8.5H18" stroke="#d9d9d9" stroke-width="1.200" stroke-dasharray="1.500 1.200" opacity=".75"/><path d="M0 11.5H18" stroke="#d9d9d9" stroke-width="1.200" stroke-dasharray="1.500 1.200" opacity=".75"/><path d="M0 15.500H5M0 20H6" stroke="#d9d9d9" stroke-width="2.400"/><path d="M6 17C9 11.500 19.500 11.500 22.500 17C19.500 22.500 9 22.500 6 17Z" fill="#fff" stroke="#d9d9d9" stroke-width="1.800"/><circle cx="14.200" cy="17" r="3.300" fill="#d9d9d9"/><path d="M10 22.500L19 10.500" stroke="#fff" stroke-width="4"/><path d="M10 22.500L19 10.500" stroke="#d9d9d9" stroke-width="1.800"/></svg>
<svg style="left:461.5px;top:148.3px" width="24" height="24" viewBox="0 0 24 24"><rect x="0" y="0" width="18" height="2.700" fill="#d9d9d9"/><path d="M0 5.5H18" stroke="#d9d9d9" stroke-width="1.200" stroke-dasharray="1.500 1.200" opacity=".75"/><path d="M0 8.5H18" stroke="#d9d9d9" stroke-width="1.200" stroke-dasharray="1.500 1.200" opacity=".75"/><path d="M0 11.5H18" stroke="#d9d9d9" stroke-width="1.200" stroke-dasharray="1.500 1.200" opacity=".75"/><path d="M0 15.500H5M0 20H6" stroke="#d9d9d9" stroke-width="2.400"/><path d="M6 17C9 11.500 19.500 11.500 22.500 17C19.500 22.500 9 22.500 6 17Z" fill="#fff" stroke="#d9d9d9" stroke-width="1.800"/><circle cx="14.200" cy="17" r="3.300" fill="#d9d9d9"/></svg>
<svg style="left:498px;top:148px" width="22" height="21" viewBox="0 0 22 21"><path d="M20 10.500H5M11 2.500L3 10.500L11 18.500" fill="none" stroke="#d9d9d9" stroke-width="4.800" stroke-linecap="round" stroke-linejoin="round"/></svg>
<svg style="left:530px;top:148px" width="22" height="21" viewBox="0 0 22 21"><path d="M2 10.500H17M11 2.500L19 10.500L11 18.500" fill="none" stroke="#d9d9d9" stroke-width="4.800" stroke-linecap="round" stroke-linejoin="round"/></svg>
<svg style="left:560px;top:154px" width="15" height="11" viewBox="0 0 15 11"><path d="M0.800 6L3.500 3.200L5.500 5.500L7.500 0.800L10.200 3.500V1L13.800 1.800V9.800H7L9 8L6.200 4.800L4.200 9.200L2.800 7.500Z" fill="#9fd89f" stroke="#1a8a2e" stroke-width="1.100" stroke-linejoin="round"/></svg>
<svg style="left:744px;top:156.5px" width="9" height="6" viewBox="0 0 9 6"><path d="M0.500 0.800L4.500 4.800L8.500 0.800" fill="none" stroke="#444" stroke-width="1.200"/></svg>
<svg style="left:765px;top:146px" width="26" height="26" viewBox="0 0 26 26"><path d="M3 9.500L10 17L22 4" fill="none" stroke="#6e6e6e" stroke-width="5" stroke-linejoin="miter" stroke-linecap="round"/><path d="M10.6 18.2H25.8M18.2 10.6V25.8" stroke="#fff" stroke-width="6.4"/><path d="M13.8 18.2H22.6M18.2 13.8V22.6" stroke="#17bb00" stroke-width="4.4" stroke-linecap="round"/></svg>
<svg style="left:803px;top:147px" width="25" height="24" viewBox="0 0 25 24"><rect x="1" y="1" width="20" height="18" rx="1" fill="none" stroke="#d9d9d9" stroke-width="1.800"/><rect x="1" y="1" width="20" height="3.800" fill="#d9d9d9"/><circle cx="3.500" cy="2.800" r=".7" fill="#fff"/><circle cx="6" cy="2.800" r=".7" fill="#fff"/><circle cx="8.500" cy="2.800" r=".7" fill="#fff"/><circle cx="17.5" cy="16.5" r="7" fill="#fff"/><circle cx="17.5" cy="16.5" r="4.8" fill="#d9d9d9"/><rect x="16" y="9.9" width="3" height="13.2" fill="#d9d9d9" transform="rotate(0 17.5 16.5)"/><rect x="16" y="9.9" width="3" height="13.2" fill="#d9d9d9" transform="rotate(45 17.5 16.5)"/><rect x="16" y="9.9" width="3" height="13.2" fill="#d9d9d9" transform="rotate(90 17.5 16.5)"/><rect x="16" y="9.9" width="3" height="13.2" fill="#d9d9d9" transform="rotate(135 17.5 16.5)"/><circle cx="17.5" cy="16.5" r="2.016" fill="#fff"/></svg>
<!-- /GEN:ED -->
<!-- EDITOR -->
<div class="a" style="left:245px;top:177px;width:854px;height:290px;border:1px solid #828790;background:#fff;box-sizing:border-box"></div>
<div class="a" style="left:246px;top:178px;width:66px;height:290px;background:#f0f0f0"></div>
<div class="a" style="left:312px;top:178px;width:1.4px;height:290px;background:#000"></div>
<div class="a" style="left:958px;top:178px;width:1px;height:274px;background:#000"></div>
<div class="a" style="left:1082px;top:178px;width:15px;height:290px;background:#f0f0f0"></div>
<div class="a" style="left:1082px;top:195px;width:15px;height:206px;background:#c1c1c1"></div>
<svg style="left:1085.5px;top:184px" width="8" height="6"><path d="M0.800 5L4 1.800L7.200 5" fill="none" stroke="#505050" stroke-width="1.900"/></svg>
<!-- CODE -->
<div class="ln"None style="top:178px">1</div>
<div class="code" id="c1" style="top:179px"><span class="k">Sub</span> PreparePaint(mspaint, wMain, wTools, wColors)</div>
<div class="ln"None style="top:196px">2</div>
<div class="code" id="c2" style="top:197px">  <span class="k">Dim</span> wnd, wPicture</div>
<div class="ln"None style="top:214px">3</div>
<div class="code" id="c3" style="top:215px">  <span class="k">If</span> (win7) <span class="k">Then</span></div>
<div class="ln"None style="top:232px">4</div>
<div class="code" id="c4" style="top:233px">    <span class="c">' TODO 3 -cCategory1 -oJack  : The correction description</span></div>
<div class="ln"None style="top:250px">5</div>
<div class="code" id="c5" style="top:251px">    <span class="k">Call</span> wMain.Keys(<span class="s">"^n"</span>)</div>
<div class="ln"None style="top:268px">6</div>
<div class="code" id="c6" style="top:269px">    <span class="k">Set</span> wnd = mspaint.WaitWindow(<span class="s">"#*"</span>, <span class="s">"*"</span>, <span class="n">1</span>, <span class="n">2000</span>)</div>
<div class="ln"None style="top:286px">7</div>
<div class="code" id="c7" style="top:287px">    <span class="k">If</span> (wnd.Exists) <span class="k">Then</span></div>
<div class="ln"None style="top:304px">8</div>
<div class="code" id="c8" style="top:305px">      <span class="k">Call</span> wnd.Keys(<span class="s">"n"</span>)</div>
<div class="ln"None style="top:322px">9</div>
<div class="code" id="c9" style="top:323px">    <span class="k">End If</span></div>
<div class="ln"None style="top:340px">10</div>
<div class="code" id="c10" style="top:341px">    <span class="k">Call</span> wMain.Keys(<span class="s">"^e"</span>)</div>
<div class="ln"None style="top:358px">11</div>
<div class="code" id="c11" style="top:359px">    <span class="k">Set</span> wnd = mspaint.Window(<span class="s">"#32770"</span>, <span class="s">"Image Properties"</span>)</div>
<div class="ln"None style="top:376px">12</div>
<div class="code" id="c12" style="top:377px">  <span class="k">Else</span></div>
<div class="ln"None style="top:394px">13</div>
<div class="code" id="c13" style="top:395px">    <span class="k">Call</span> wMain.MainMenu.Click(<span class="s">"File|New"</span>)</div>
<div class="ln"None style="top:412px">14</div>
<div class="code" id="c14" style="top:413px">    <span class="k">Set</span> wnd = mspaint.WaitWindow(<span class="s">"#*"</span>, <span class="s">"*"</span>, <span class="n">1</span>, <span class="n">1000</span>)</div>
<div class="ln"None style="top:430px">15</div>
<div class="code" id="c15" style="top:431px">}</div>
<div class="ln"None style="top:448px">16</div>
<div class="a" style="left:298px;top:183px;width:9px;height:9px;box-sizing:border-box;border:1px solid #808080;background:#fff"></div><div class="a" style="left:300px;top:187px;width:5px;height:1px;background:#404040"></div>
<div class="a" style="left:298px;top:327px;width:9px;height:9px;box-sizing:border-box;border:1px solid #808080;background:#fff"></div><div class="a" style="left:300px;top:331px;width:5px;height:1px;background:#404040"></div>
<div class="a" style="left:302px;top:193px;width:1px;height:92px;background:#808080"></div><div class="a" style="left:302px;top:285px;width:5px;height:1px;background:#808080"></div>
<div class="a" style="left:302px;top:337px;width:1px;height:110px;background:#808080"></div><div class="a" style="left:302px;top:447px;width:5px;height:1px;background:#808080"></div>
<div class="a" style="left:302px;top:452px;width:1px;height:10px;background:#808080"></div>
<!-- TODO PANEL -->
<div class="a" style="left:0;top:461px;width:1102px;height:149px;background:#fff"></div>
<div class="a" style="left:3px;top:464px;width:1098px;height:22px;background:linear-gradient(#9ab5d6,#b6d0ea)"></div>
<div class="a" style="left:3px;top:486px;width:1098px;height:1px;background:#7c8594"></div>
<div class="t" id="tdhdr" style="left:25px;top:469px;letter-spacing:-0.35px">To Do</div>
<!-- TODO TABLE -->
<div class="t" id="h0" style="left:5px;top:490px;letter-spacing:-0.47px">Done</div>
<div class="t" id="h1" style="left:192px;top:490px;letter-spacing:-0.22px">Description</div>
<div class="t" id="h2" style="left:381px;top:490px;letter-spacing:-0.09px">Priority</div>
<div class="t" id="h3" style="left:569px;top:490px;letter-spacing:-0.18px">Owner</div>
<div class="t" id="h4" style="left:757px;top:490px;letter-spacing:-0.02px">Category</div>
<div class="t" id="h5" style="left:945px;top:490px;letter-spacing:-0.43px">Module</div>
<div class="col" style="left:189px"></div>
<div class="col" style="left:377px"></div>
<div class="col" style="left:566px"></div>
<div class="col" style="left:754px"></div>
<div class="col" style="left:942px"></div>
<div class="a" style="left:190px;top:517px;width:911px;height:19px;background:#3399ff;box-sizing:border-box;border-top:1px dotted #cc6600;border-bottom:1px dotted #cc6600"></div>
<div class="a" style="left:40px;top:517px;width:150px;height:19px;box-sizing:border-box;border:1px dotted #222"></div>
<div class="t" id="d0" style="left:192px;top:520px;color:#fff;letter-spacing:-0.13px">The correction description</div>
<div class="t" style="left:382px;top:520px;color:#fff">1</div>
<div class="t" id="o0" style="left:570px;top:520px;color:#fff;letter-spacing:-0.41px">Jack</div>
<div class="t" id="g0" style="left:757px;top:520px;color:#fff;letter-spacing:0.08px">Category1</div>
<div class="t" id="mo0" style="left:946px;top:520px;color:#fff;letter-spacing:-0.4px">LLRecorder_VBScript.LLRecorder_VB</div>
<div class="t" id="d1" style="left:192px;top:539px;letter-spacing:-0.13px">The correction description</div>
<div class="t" style="left:398px;top:539px">2</div>
<div class="t" id="o1" style="left:569px;top:539px;letter-spacing:-0.01px">Robert</div>
<div class="t" id="g1" style="left:757px;top:539px;letter-spacing:0.08px">Category1</div>
<div class="t" id="mo1" style="left:946px;top:539px;letter-spacing:-0.4px">LLRecorder_VBScript.LLRecorder_VB</div>
<div class="t" id="d2" style="left:192px;top:558px;letter-spacing:-0.13px">The correction description</div>
<div class="t" style="left:398px;top:558px">3</div>
<div class="t" id="o2" style="left:570px;top:558px;letter-spacing:-0.41px">Jack</div>
<div class="t" id="g2" style="left:757px;top:558px;letter-spacing:0.08px">Category1</div>
<div class="t" id="mo2" style="left:946px;top:558px;letter-spacing:-0.4px">LLRecorder_VBScript.LLRecorder_VB</div>
<!-- TODO-ICONS -->
<svg style="left:10px;top:467.5px" width="9" height="13" viewBox="0 0 9 13"><path d="M0.500 0.500H6L8.500 3V12.500H0.500Z" fill="#fff" stroke="#9a9a9a"/></svg>
<svg style="left:8px;top:469px" width="9" height="13" viewBox="0 0 9 13"><path d="M0.500 0.500H6L8.500 3V12.500H0.500Z" fill="#fff" stroke="#9a9a9a"/></svg>
<svg style="left:6px;top:470px" width="10" height="13" viewBox="0 0 10 13"><path d="M0.500 0.500H6.5L9.5 3.500V12.5H0.500Z" fill="#fff" stroke="#9a9a9a" stroke-width="1"/><path d="M6.5 0.500V3.500H9.5" fill="#d8d8d8" stroke="#9a9a9a" stroke-width=".8"/><path d="M8.50 8.70L1.50 8.70M7.47 11.17L2.53 6.23M5.00 12.20L5.00 5.20M2.53 11.17L7.47 6.23" stroke="#d42a1a" stroke-width="1.200"/><circle cx="5" cy="8.7" r="1.600" fill="#d42a1a"/></svg>
<svg style="left:24px;top:519px" width="11" height="14" viewBox="0 0 11 14"><path d="M0.500 0.500H7.5L10.5 3.500V13.5H0.500Z" fill="#fff" stroke="#9a9a9a" stroke-width="1"/><path d="M7.5 0.500V3.500H10.5" fill="#d8d8d8" stroke="#9a9a9a" stroke-width=".8"/><path d="M9.00 9.20L2.00 9.20M7.97 11.67L3.03 6.73M5.50 12.70L5.50 5.70M3.03 11.67L7.97 6.73" stroke="#d42a1a" stroke-width="1.200"/><circle cx="5.5" cy="9.2" r="1.600" fill="#d42a1a"/></svg>
<svg style="left:24px;top:538px" width="11" height="14" viewBox="0 0 11 14"><path d="M0.500 0.500H7.5L10.5 3.500V13.5H0.500Z" fill="#fff" stroke="#9a9a9a" stroke-width="1"/><path d="M7.5 0.500V3.500H10.5" fill="#d8d8d8" stroke="#9a9a9a" stroke-width=".8"/><path d="M9.00 9.20L2.00 9.20M7.97 11.67L3.03 6.73M5.50 12.70L5.50 5.70M3.03 11.67L7.97 6.73" stroke="#d42a1a" stroke-width="1.200"/><circle cx="5.5" cy="9.2" r="1.600" fill="#d42a1a"/></svg>
<svg style="left:24px;top:557px" width="11" height="14" viewBox="0 0 11 14"><path d="M0.500 0.500H7.5L10.5 3.500V13.5H0.500Z" fill="#fff" stroke="#9a9a9a" stroke-width="1"/><path d="M7.5 0.500V3.500H10.5" fill="#d8d8d8" stroke="#9a9a9a" stroke-width=".8"/><path d="M9.00 9.20L2.00 9.20M7.97 11.67L3.03 6.73M5.50 12.70L5.50 5.70M3.03 11.67L7.97 6.73" stroke="#d42a1a" stroke-width="1.200"/><circle cx="5.5" cy="9.2" r="1.600" fill="#d42a1a"/></svg>
<svg style="left:58px;top:520px" width="13" height="13" viewBox="0 0 13 13"><rect x="0.500" y="0.500" width="12" height="12" fill="#f4f4f4" stroke="#8e8f8f"/><rect x="2" y="2" width="9" height="9" fill="#dfe3ea" stroke="#b8bcc4" stroke-width="1"/><path d="M3 6.500L5.500 9.500L10 2.800" fill="none" stroke="#3554b4" stroke-width="1.900"/></svg>
<svg style="left:58px;top:539px" width="13" height="13" viewBox="0 0 13 13"><rect x="0.500" y="0.500" width="12" height="12" fill="#f4f4f4" stroke="#8e8f8f"/><rect x="2" y="2" width="9" height="9" fill="#dfe3ea" stroke="#b8bcc4" stroke-width="1"/><path d="M3 6.500L5.500 9.500L10 2.800" fill="none" stroke="#3554b4" stroke-width="1.900"/></svg>
<svg style="left:58px;top:558px" width="13" height="13" viewBox="0 0 13 13"><rect x="0.500" y="0.500" width="12" height="12" fill="#f4f4f4" stroke="#8e8f8f"/><rect x="2" y="2" width="9" height="9" fill="#dfe3ea" stroke="#b8bcc4" stroke-width="1"/></svg>
<div class="dot-v" style="left:11px;top:526px;height:38px"></div>
<div class="dot-h" style="left:12px;top:526px;width:10px"></div>
<div class="dot-h" style="left:12px;top:545px;width:10px"></div>
<div class="dot-h" style="left:12px;top:564px;width:10px"></div>
<div class="a" style="left:388px;top:518px;width:17px;height:17px;background:#fff"></div>
<div class="a" style="left:389px;top:518px;width:16px;height:8px;box-sizing:border-box;border:1px solid #9aa3b0;background:linear-gradient(#f6f7f9,#dde1e8)"></div>
<div class="a" style="left:389px;top:527px;width:16px;height:8px;box-sizing:border-box;border:1px solid #9aa3b0;background:linear-gradient(#f6f7f9,#dde1e8)"></div>
<svg style="left:394px;top:520.5px" width="6" height="4" viewBox="0 0 6 4"><path d="M0 3.500L3 0.500L6 3.500Z" fill="#4b5fc4"/></svg>
<svg style="left:394px;top:529px" width="6" height="4" viewBox="0 0 6 4"><path d="M0 0.500L3 3.500L6 0.500Z" fill="#4b5fc4"/></svg>
<div class="btn" style="left:1018px;top:467px;width:28px;height:16px;border-color:#6d85b0;background:linear-gradient(#d4e1f2 0%,#c0d2ea 48%,#a9c0df 52%,#b5cbe6 100%)"></div>
<svg style="left:1026px;top:468px" width="12" height="14"><text x="6" y="11" text-anchor="middle" font-family="Liberation Sans,sans-serif" font-weight="bold" font-size="12" fill="#fff" stroke="#333" stroke-width="2" paint-order="stroke" stroke-linejoin="round">?</text></svg>
<svg style="left:1054px;top:468.5px" width="14" height="13" viewBox="0 0 14 13"><path d="M0.500 6.500H4" stroke="#8a8a8a" stroke-width="1.200"/><path d="M4 3.500L6.500 4.500H11.500V9H6.500L4 10Z" fill="#eef2f7" stroke="#8a8a8a" stroke-width="1"/><path d="M11.500 2.500V11" stroke="#8a8a8a" stroke-width="1.200"/></svg>
<div class="btn" style="left:1076px;top:467px;width:28px;height:16px;border-color:#5a2b26;background:linear-gradient(#e9a99c 0%,#d87e6c 48%,#c4513a 52%,#d4745f 100%)"></div>
<svg style="left:1084px;top:470.5px" width="12" height="9" viewBox="0 0 12 9"><path d="M2 2L10 7M10 2L2 7" stroke="#333" stroke-width="3.800" stroke-linecap="round"/><path d="M2 2L10 7M10 2L2 7" stroke="#fff" stroke-width="1.900" stroke-linecap="round"/></svg>
<!-- /GEN:TD -->
<!-- ORANGE FRAME -->
<div class="a" style="left:0;top:461px;width:1102px;height:149px;box-sizing:border-box;border:3px solid #ff8000;border-right-width:1px"></div>
<div class="a" style="left:479px;top:448px;width:168px;height:30px;box-sizing:border-box;border:3px solid #ff8000;border-radius:6px;background:#fff"></div>
<div class="t" id="callout" style="left:520px;top:452.5px;font-size:15.5px;line-height:20px;height:20px;color:#ff8000;letter-spacing:-0.19px">To Do Panel</div>
<!-- BOTTOM -->
<div class="a" style="left:0;top:610px;width:1102px;height:21px;background:#fff"></div>
<div class="a" style="left:3px;top:612px;width:241px;height:18px;background:#f0f0f0;border:1px solid #d9d9d9;box-sizing:border-box"></div>
<div class="a" style="left:70px;top:612px;width:1px;height:18px;background:#d9d9d9"></div>
<div class="a" style="left:201px;top:612px;width:1px;height:18px;background:#d9d9d9"></div>
<div class="a" style="left:0;top:631px;width:1102px;height:17px;background:#f0f0f0"></div>
<div class="a" style="left:0;top:630px;width:1102px;height:1px;background:#dcdcdc"></div>
<div class="a" style="left:54px;top:632px;width:1px;height:16px;background:#d0d0d0"></div>
<div class="a" style="left:108px;top:632px;width:1px;height:16px;background:#d0d0d0"></div>
<div class="a" style="left:205px;top:632px;width:1px;height:16px;background:#d0d0d0"></div>
<div class="a" style="left:239px;top:632px;width:1px;height:16px;background:#d0d0d0"></div>
<div class="t" id="sb1" style="left:111px;top:634px;color:#9a9a9a;transform:scaleX(0.867);transform-origin:0 0">CAPS</div>
<div class="t" id="sb2" style="left:145px;top:634px;transform:scaleX(0.876);transform-origin:0 0">NUM</div>
<div class="t" id="sb3" style="left:175px;top:634px;color:#9a9a9a;transform:scaleX(0.836);transform-origin:0 0">SCRL</div>
<div class="t" id="sb4" style="left:211px;top:634px;color:#9a9a9a;transform:scaleX(0.861);transform-origin:0 0">OVR</div>
<div class="a" style="left:1100px;top:640px;width:2px;height:2px;background:#a8a8a8"></div><div class="a" style="left:1100px;top:643px;width:2px;height:2px;background:#a8a8a8"></div><div class="a" style="left:1100px;top:646px;width:2px;height:2px;background:#a8a8a8"></div><div class="a" style="left:1097px;top:643px;width:2px;height:2px;background:#a8a8a8"></div><div class="a" style="left:1097px;top:646px;width:2px;height:2px;background:#a8a8a8"></div><div class="a" style="left:1094px;top:646px;width:2px;height:2px;background:#a8a8a8"></div>
</body>
</html>
